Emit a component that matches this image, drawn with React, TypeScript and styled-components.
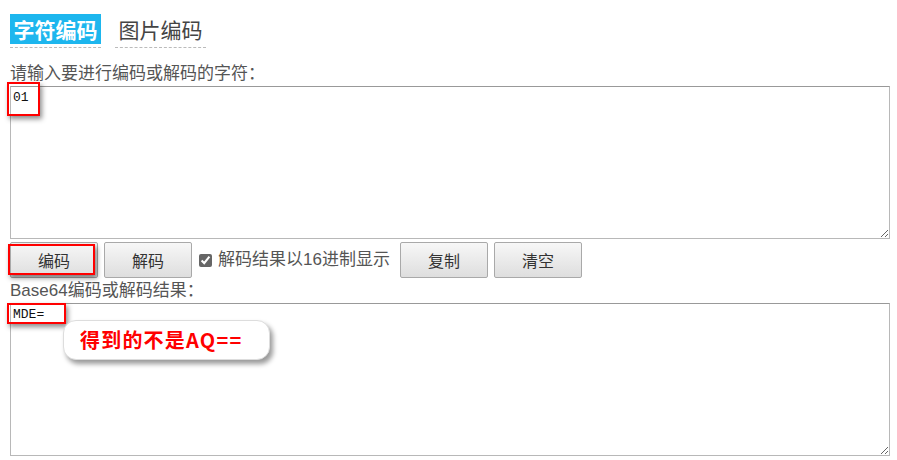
import React from 'react';
import styled, {createGlobalStyle} from 'styled-components';

const GlobalStyle = createGlobalStyle`
  html, body {
    margin: 0;
    padding: 0;
    background: #fff;
  }
  body {
    font-family: "Liberation Sans", "Noto Sans CJK SC", sans-serif;
    color: #444;
  }
`;

const App: React.FC = () => {
  return (
    <>
      <GlobalStyle />
      <StyledPage>
        <StyledTabs>
          <StyledTab active>字符编码</StyledTab>
          <StyledTab>图片编码</StyledTab>
        </StyledTabs>
        <StyledLabel>请输入要进行编码或解码的字符：</StyledLabel>
        <StyledAreaWrap>
          <StyledTextArea defaultValue="01" spellCheck={false} />
          <StyledMark style={{left: -3, top: -4, width: 29, height: 30}} />
        </StyledAreaWrap>
        <StyledToolbar>
          <StyledButtonWrap>
            <StyledButton>编码</StyledButton>
            <StyledMark style={{left: -2, top: 2, width: 83, height: 27}} />
          </StyledButtonWrap>
          <StyledButton>解码</StyledButton>
          <StyledCheckLabel>
            <StyledCheck type="checkbox" defaultChecked />
            解码结果以16进制显示
          </StyledCheckLabel>
          <StyledButton>复制</StyledButton>
          <StyledButton>清空</StyledButton>
        </StyledToolbar>
        <StyledLabel>Base64编码或解码结果：</StyledLabel>
        <StyledAreaWrap>
          <StyledTextArea defaultValue="MDE=" spellCheck={false} />
          <StyledMark style={{left: -3, top: 0, width: 55, height: 17}} />
          <StyledCallout>得到的不是AQ==</StyledCallout>
        </StyledAreaWrap>
      </StyledPage>
    </>
  );
};

const StyledPage = styled.div`
  width: 880px;
  padding: 14px 0 0 10px;
`;
const StyledTabs = styled.div`
  display: flex;
  gap: 14px;
  margin-bottom: 20px;
`;
const StyledTab = styled.div<{active?: boolean}>`
  width: 91px;
  height: 30px;
  line-height: 30px;
  font-size: 21px;
  text-align: center;
  font-family: "Noto Sans CJK SC", sans-serif;
  font-weight: ${(p) => (p.active ? 700 : 400)};
  color: ${(p) => (p.active ? '#fff' : '#444')};
  background: ${(p) => (p.active ? '#1db6ee' : 'transparent')};
  position: relative;
  &::after {
    content: '';
    position: absolute;
    left: 0;
    right: 0;
    bottom: -4px;
    border-bottom: 1px dashed #bbb;
  }
`;
const StyledLabel = styled.div`
  font-size: 17px;
  line-height: 20px;
  height: 20px;
  color: #555;
  font-family: "Liberation Sans", "Noto Sans CJK SC", sans-serif;
  margin-bottom: 2px;
`;
const StyledAreaWrap = styled.div`
  position: relative;
  width: 880px;
`;
const StyledTextArea = styled.textarea`
  display: block;
  box-sizing: border-box;
  width: 880px;
  height: 153px;
  border: 1px solid #b8b8b8;
  border-top-color: #999;
  padding: 3px 2px;
  margin: 0;
  font-family: "Liberation Mono", "DejaVu Sans Mono", monospace;
  font-size: 13px;
  line-height: 16px;
  color: #111;
  resize: both;
  outline: none;
`;
const StyledMark = styled.div`
  position: absolute;
  border: 2px solid #f00;
  box-shadow: 2px 3px 5px rgba(0, 0, 0, 0.45);
  pointer-events: none;
`;
const StyledToolbar = styled.div`
  display: flex;
  align-items: center;
  gap: 6px;
  margin: 3px 0 3px;
`;
const StyledButtonWrap = styled.div`
  position: relative;
`;
const StyledButton = styled.button`
  width: 88px;
  height: 36px;
  border: 1px solid #a9a9a9;
  border-radius: 2px;
  background: linear-gradient(#f7f7f7, #dedede);
  font-family: "Noto Sans CJK SC", sans-serif;
  font-size: 16px;
  color: #333;
  padding: 0;
`;
const StyledCheckLabel = styled.label`
  display: flex;
  align-items: center;
  gap: 6px;
  font-size: 17px;
  line-height: 20px;
  color: #555;
  font-family: "Liberation Sans", "Noto Sans CJK SC", sans-serif;
  margin-right: 4px;
`;
const StyledCheck = styled.input`
  width: 13px;
  height: 13px;
  margin: 0 0 0 1px;
  accent-color: #666;
`;
const StyledCallout = styled.div`
  position: absolute;
  left: 53px;
  top: 17px;
  width: 207px;
  height: 40px;
  box-sizing: border-box;
  border: 1px solid #ddd;
  border-radius: 13px;
  background: #fff;
  box-shadow: 3px 4px 5px rgba(0, 0, 0, 0.4);
  padding-left: 16px;
  line-height: 38px;
  font-size: 20px;
  letter-spacing: 1.2px;
  font-weight: 700;
  color: #f00;
  font-family: "Noto Sans CJK SC", sans-serif;
`;

export default App;
